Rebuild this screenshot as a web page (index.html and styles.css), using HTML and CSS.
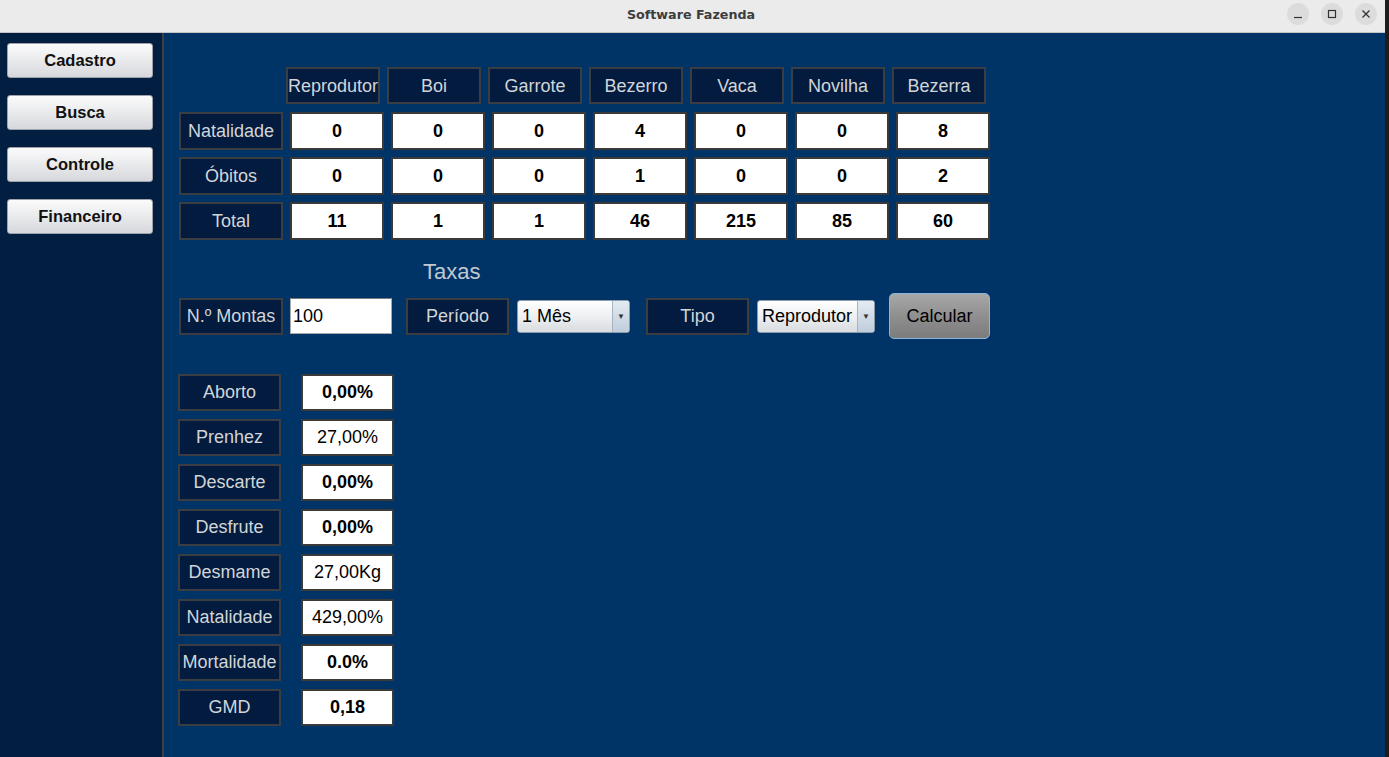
FILE: index.html
```html
<!DOCTYPE html>
<html lang="pt">
<head>
<meta charset="utf-8">
<title>Software Fazenda</title>
<link rel="stylesheet" href="styles.css">
</head>
<body>
<div class="window">
  <div class="frame">
    <div class="titlebar">
      <div class="title">Software Fazenda</div>
      <div class="controls">
        <span class="ctl"><svg width="10" height="10" viewBox="0 0 10 10"><path d="M1 8.5h8" stroke="#333" stroke-width="1.2"/></svg></span>
        <span class="ctl"><svg width="10" height="10" viewBox="0 0 10 10"><rect x="1.5" y="1.5" width="7" height="7" fill="none" stroke="#333" stroke-width="1.2"/></svg></span>
        <span class="ctl"><svg width="10" height="10" viewBox="0 0 10 10"><path d="M1.5 1.5l7 7M8.5 1.5l-7 7" stroke="#333" stroke-width="1.3"/></svg></span>
      </div>
    </div>
    <div class="content">
      <nav class="sidebar">
        <button class="navbtn">Cadastro</button>
        <button class="navbtn">Busca</button>
        <button class="navbtn">Controle</button>
        <button class="navbtn">Financeiro</button>
      </nav>
      <main class="main">
        <div class="table">
          <div class="row head">
            <div class="lbl col">Reprodutor</div>
            <div class="lbl col">Boi</div>
            <div class="lbl col">Garrote</div>
            <div class="lbl col">Bezerro</div>
            <div class="lbl col">Vaca</div>
            <div class="lbl col">Novilha</div>
            <div class="lbl col">Bezerra</div>
          </div>
          <div class="rows">
            <div class="row">
              <div class="lbl rowlbl">Natalidade</div>
              <div class="val cell">0</div><div class="val cell">0</div><div class="val cell">0</div><div class="val cell">4</div><div class="val cell">0</div><div class="val cell">0</div><div class="val cell">8</div>
            </div>
            <div class="row">
              <div class="lbl rowlbl">Óbitos</div>
              <div class="val cell">0</div><div class="val cell">0</div><div class="val cell">0</div><div class="val cell">1</div><div class="val cell">0</div><div class="val cell">0</div><div class="val cell">2</div>
            </div>
            <div class="row">
              <div class="lbl rowlbl">Total</div>
              <div class="val cell">11</div><div class="val cell">1</div><div class="val cell">1</div><div class="val cell">46</div><div class="val cell">215</div><div class="val cell">85</div><div class="val cell">60</div>
            </div>
          </div>
        </div>

        <div class="taxas-title">Taxas</div>

        <div class="form">
          <div class="lbl f-lbl">N.º Montas</div>
          <div class="input">100</div>
          <div class="lbl f-lbl p-lbl">Período</div>
          <div class="combo c-periodo"><span class="ctext">1 Mês</span><span class="arrow">▼</span></div>
          <div class="lbl f-lbl t-lbl">Tipo</div>
          <div class="combo c-tipo"><span class="ctext">Reprodutor</span><span class="arrow">▼</span></div>
          <button class="calc">Calcular</button>
        </div>

        <div class="rates">
          <div class="rate"><div class="lbl rlbl">Aborto</div><div class="val rval">0,00%</div></div>
          <div class="rate"><div class="lbl rlbl">Prenhez</div><div class="val rval thin">27,00%</div></div>
          <div class="rate"><div class="lbl rlbl">Descarte</div><div class="val rval">0,00%</div></div>
          <div class="rate"><div class="lbl rlbl">Desfrute</div><div class="val rval">0,00%</div></div>
          <div class="rate"><div class="lbl rlbl">Desmame</div><div class="val rval thin">27,00Kg</div></div>
          <div class="rate"><div class="lbl rlbl">Natalidade</div><div class="val rval thin">429,00%</div></div>
          <div class="rate"><div class="lbl rlbl">Mortalidade</div><div class="val rval">0.0%</div></div>
          <div class="rate"><div class="lbl rlbl">GMD</div><div class="val rval">0,18</div></div>
        </div>
      </main>
    </div>
  </div>
  <div class="edge"></div>
</div>
</body>
</html>
```

FILE: styles.css
```css
* { box-sizing: border-box; }
html, body {
  margin: 0;
  padding: 0;
  width: 1389px;
  height: 757px;
  overflow: hidden;
  font-family: "Liberation Sans", Arial, sans-serif;
}
.window {
  display: flex;
  width: 1389px;
  height: 757px;
}
.frame {
  width: 1385px;
  display: flex;
  flex-direction: column;
}
.edge {
  width: 4px;
  background: #1c1c1c;
}
.titlebar {
  height: 33px;
  background: #ebebeb;
  border-bottom: 1px solid #c4c4c4;
  position: relative;
  display: flex;
  align-items: center;
  justify-content: center;
}
.title {
  font-family: "DejaVu Sans", sans-serif;
  font-weight: bold;
  font-size: 12.7px;
  color: #3d3d3d;
  margin-top: -3px;
  margin-left: -3px;
}
.controls {
  position: absolute;
  right: 8px;
  top: 3px;
  display: flex;
  gap: 12px;
}
.ctl {
  width: 22px;
  height: 22px;
  border-radius: 50%;
  background: #dcdcdc;
  display: flex;
  align-items: center;
  justify-content: center;
}
.content {
  flex: 1;
  display: flex;
  background: #003466;
}
.sidebar {
  width: 164px;
  background: #021e40;
  border-right: 2px solid #3c3f44;
  padding: 10px 0 0 7px;
  display: flex;
  flex-direction: column;
  gap: 17px;
}
.navbtn {
  width: 146px;
  height: 35px;
  border: 1px solid #9ea3aa;
  border-radius: 3px;
  background: linear-gradient(#fbfbfc, #e9eaec 50%, #d6d8dd);
  font-family: "Liberation Sans", Arial, sans-serif;
  font-weight: bold;
  font-size: 16.5px;
  color: #111;
  padding: 0;
}
.main {
  flex: 1;
  padding: 34px 0 0 15px;
}
.lbl {
  background: #021b3e;
  border: 2px solid #3a3d42;
  color: #d2d5d8;
  font-size: 18px;
  display: flex;
  align-items: center;
  justify-content: center;
  white-space: nowrap;
  height: 37px;
}
.val {
  background: #fff;
  border: 2px solid #3a3a3a;
  color: #000;
  font-size: 18px;
  font-weight: bold;
  display: flex;
  align-items: center;
  justify-content: center;
  height: 37px;
}
.val.thin { font-weight: normal; }
.table {
  display: flex;
  flex-direction: column;
  gap: 8px;
}
.rows {
  display: flex;
  flex-direction: column;
  gap: 7px;
}
.row {
  display: flex;
  gap: 7px;
}
.row.head {
  margin-left: 107px;
}
.head .lbl { padding-top: 1px; }
.col { width: 94px; }
.rows .lbl, .rows .val { height: 38px; }
.rowlbl { width: 104px; }
.cell { width: 94px; }
.taxas-title {
  margin: 19px 0 0 244px;
  font-size: 22px;
  color: #c3c9d0;
  height: 26px;
  line-height: 26px;
}
.form {
  margin-top: 8px;
  height: 46px;
  display: flex;
  align-items: center;
}
.f-lbl { width: 104px; }
.p-lbl { margin-left: 14px; width: 103px; }
.t-lbl { margin-left: 16px; width: 103px; }
.input {
  margin-left: 7px;
  width: 102px;
  height: 36px;
  background: #fff;
  border: 1px solid #a9a9a9;
  border-top-color: #7a7a7a;
  font-size: 18px;
  color: #000;
  display: flex;
  align-items: center;
  padding-left: 2px;
}
.combo {
  margin-left: 8px;
  height: 33px;
  display: flex;
  border: 1px solid #8d9bab;
  border-radius: 3px;
  background: linear-gradient(#ffffff, #eceef0 55%, #d8dbdf);
  overflow: hidden;
}
.c-periodo { width: 113px; }
.c-tipo { width: 118px; }
.ctext {
  flex: 1;
  font-size: 18px;
  color: #000;
  display: flex;
  align-items: center;
  padding-left: 4px;
}
.arrow {
  width: 17px;
  border-left: 1px solid #a6b4c2;
  background: linear-gradient(#e4ebf2, #bfcddb);
  font-size: 8px;
  color: #333;
  display: flex;
  align-items: center;
  justify-content: center;
}
.calc {
  margin-left: 14px;
  width: 101px;
  height: 46px;
  border: 1px solid #8db4dc;
  border-radius: 5px;
  background: linear-gradient(#a8a8a8, #8f8f8f 50%, #7c7c7c);
  font-family: "Liberation Sans", Arial, sans-serif;
  font-size: 18px;
  color: #000;
  padding: 0;
}
.rates {
  margin-top: 35px;
  display: flex;
  flex-direction: column;
  gap: 8px;
}
.rate {
  display: flex;
  gap: 20px;
}
.rlbl { width: 103px; margin-left: -1px; }
.rval { width: 93px; }
```
